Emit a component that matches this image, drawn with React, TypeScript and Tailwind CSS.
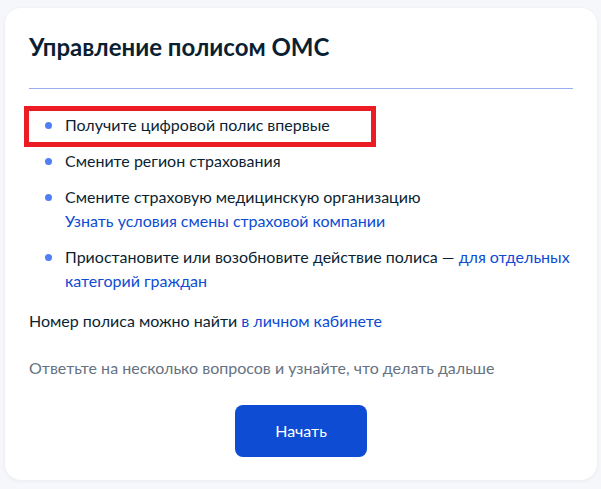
import React from "react";

function Dot() {
  return (
    <span className="flex h-[24px] w-[36px] shrink-0 items-center pl-[16px]">
      <span className="h-[7px] w-[7px] rounded-full bg-[#4f7ff3]" />
    </span>
  );
}

export default function App() {
  return (
    <div
      className="min-h-[489px] w-[601px] bg-[#f5f7fb] pt-[8px] pb-[9px]"
      style={{ fontFamily: "Lato, 'Noto Sans', sans-serif" }}
    >
      <div className="ml-[5px] w-[592px] rounded-[16px] bg-white px-[24px] pt-[23px] pb-[23px] text-[16px] leading-[24px] text-[#0b1f33] shadow-[0_1px_4px_rgba(11,31,51,0.06)]">
        <h1 className="text-[24px] font-bold leading-[32px] text-[#0b1f33]">Управление полисом ОМС</h1>
        <div className="mt-[25px] h-px bg-[#97aff0]" />
        <ul className="mt-[24px] flex flex-col gap-[12px]">
          <li className="relative flex">
            <div className="pointer-events-none absolute left-[-5px] top-[-7px] h-[41px] w-[352px] border-[5px] border-[#ec1c24]" />
            <Dot />
            <span>Получите цифровой полис впервые</span>
          </li>
          <li className="flex">
            <Dot />
            <span>Смените регион страхования</span>
          </li>
          <li className="flex">
            <Dot />
            <span>
              Смените страховую медицинскую организацию
              <br />
              <a className="text-[#0d4cd3]">Узнать условия смены страховой компании</a>
            </span>
          </li>
          <li className="flex">
            <Dot />
            <span>
              Приостановите или возобновите действие полиса —{" "}
              <a className="text-[#0d4cd3]">для отдельных категорий граждан</a>
            </span>
          </li>
        </ul>
        <p className="mt-[16px]">
          Номер полиса можно найти <a className="text-[#0d4cd3]">в личном кабинете</a>
        </p>
        <p className="mt-[23px] text-[#66727f]">Ответьте на несколько вопросов и узнайте, что делать дальше</p>
        <div className="mt-[25px] flex justify-center">
          <button className="h-[52px] w-[132px] rounded-[8px] bg-[#0d4cd3] text-[16px] text-white">Начать</button>
        </div>
      </div>
    </div>
  );
}
